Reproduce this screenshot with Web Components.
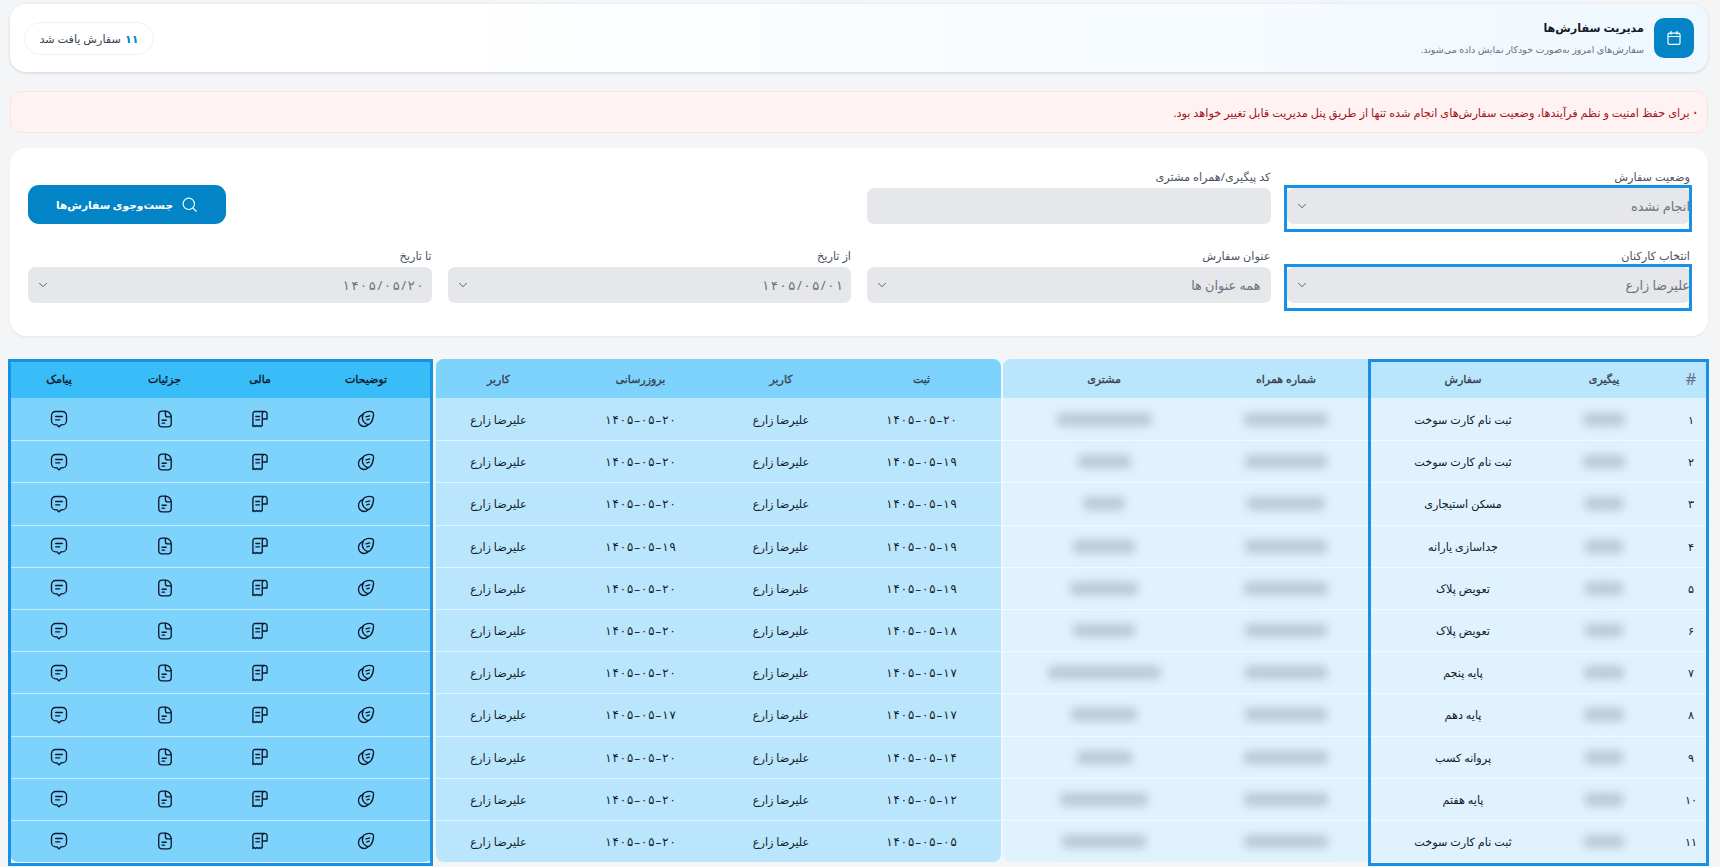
<!DOCTYPE html>
<html lang="fa" dir="rtl">
<head>
<meta charset="utf-8">
<title>مدیریت سفارش‌ها</title>
<style>
    html, body { margin: 0; height: 867px; overflow: hidden; background: #f3f5f7; }
    body {
        box-sizing: border-box;
        padding: 4px 12px 0 10px;
        font-family: "Noto Sans", "DejaVu Sans", sans-serif;
        color: #1f2937;
    }
</style>
</head>
<body>
<order-header></order-header>
<order-alert>برای حفظ امنیت و نظم فرآیندها، وضعیت سفارش‌های انجام شده تنها از طریق پنل مدیریت قابل تغییر خواهد بود.</order-alert>
<order-filters></order-filters>
<order-table></order-table>

<script>
const ICONS = {
    calendar: '<rect x="4" y="5.5" width="16" height="15" rx="2"/><path d="M4 10h16M8 3v4M16 3v4"/>',
    search: '<circle cx="11" cy="11" r="8"/><path d="M17 17l4.5 4.5"/>',
    chevron: '<path d="M6 9l6 6 6-6"/>',
    notes: '<path d="M8.5 6.5C5 8 3 11 3 14c0 4 3 7 6.5 7 2 0 3.8-.7 5-2"/><path d="M10 4.5c3.5-1.5 7.5-1.8 9.5-1 1.2.5 1.7 1.5 1.6 3-.3 4-1.5 8-3.6 10.5-1.3 1.5-3 2-4.8 1.2-2.5-1.2-4.5-3.5-5-6.5-.4-2.8.2-5.6 2.3-7.2z"/><path d="M12 9.5l4.5-1.2M13 13l3-.8"/>',
    receipt: '<path d="M17 3H6a2.5 2.5 0 0 0-2.5 2.5V21l1.6-1.3 1.6 1.3 1.6-1.3 1.6 1.3 1.6-1.3 1.6 1.3 1.6-1.3V5.5A2.5 2.5 0 0 1 17 3a2.8 2.8 0 0 1 3.5 2.7V12h-6"/><path d="M7 9h4.5M7 13h4.5"/>',
    file: '<path d="M9 2.5h3.5c4 0 7 3.5 7 7.5v7.5a4 4 0 0 1-4 4h-7a4 4 0 0 1-4-4v-11a4 4 0 0 1 4-4z"/><path d="M12.5 2.5v4a3 3 0 0 0 3 3h4"/><path d="M8.5 13.5h5M8.5 17h3"/>',
    message: '<path d="M8 3h8a5 5 0 0 1 5 5v6a5 5 0 0 1-5 5h-1.5L12 21.5 9.5 19H8a5 5 0 0 1-5-5V8a5 5 0 0 1 5-5z"/><path d="M8 9h8M8 13h5"/>'
};

function icon(name, size, width) {
    return `<svg xmlns="http://www.w3.org/2000/svg" width="${size}" height="${size}" viewBox="0 0 24 24" fill="none" stroke="currentColor" stroke-width="${width}" stroke-linecap="round" stroke-linejoin="round">${ICONS[name]}</svg>`;
}

// ارقام فارسی با letter-spacing فاصله نمی‌گیرند، برای همین هر نویسه جدا می‌شود
function spaced(text, cls) {
    return `<span class="${cls}" dir="ltr">${[...text].map(c => `<span>${c}</span>`).join('')}</span>`;
}

class OrderHeader extends HTMLElement {
    constructor() {
        super();
        this.attachShadow({ mode: 'open' });
        this.shadowRoot.innerHTML = `
            <style>
                :host {
                    display: flex;
                    align-items: center;
                    justify-content: space-between;
                    height: 68px;
                    box-sizing: border-box;
                    padding: 0 14px;
                    border-radius: 16px;
                    background: linear-gradient(to left, #eff8ff, #ffffff 75%);
                    box-shadow: 0 1px 3px rgba(100, 116, 139, .25);
                }
                .title { display: flex; align-items: center; gap: 10px; }
                .box {
                    width: 40px; height: 40px;
                    border-radius: 10px;
                    background: #0284c7;
                    color: #fff;
                    display: flex; align-items: center; justify-content: center;
                }
                h1 { margin: 0 0 7px; font-size: 11.2px; line-height: 17px; font-weight: 700; color: #111827; }
                p { margin: 0; font-size: 9.5px; line-height: 14px; color: #6b7280; }
                .count {
                    height: 33px;
                    width: 130px;
                    box-sizing: border-box;
                    border: 1px solid #eef0f3;
                    border-radius: 17px;
                    background: #fff;
                    display: flex; align-items: center; justify-content: center; gap: 4px;
                    font-size: 11.2px;
                    color: #374151;
                }
                .count b { color: #0284c7; font-weight: 700; }
            </style>
            <div class="title">
                <div class="box">${icon('calendar', 18, 1.6)}</div>
                <div>
                    <h1>مدیریت سفارش‌ها</h1>
                    <p>سفارش‌های امروز به‌صورت خودکار نمایش داده می‌شوند.</p>
                </div>
            </div>
            <div class="count"><b>۱۱</b> سفارش یافت شد</div>
        `;
    }
}

class OrderAlert extends HTMLElement {
    constructor() {
        super();
        this.attachShadow({ mode: 'open' });
        this.shadowRoot.innerHTML = `
            <style>
                :host {
                    display: flex;
                    align-items: center;
                    gap: 4px;
                    height: 42px;
                    margin-top: 19px;
                    box-sizing: border-box;
                    padding: 0 10px;
                    border: 1px solid #fde4e2;
                    border-radius: 12px;
                    background: #fef2f2;
                    color: #a3141c;
                    font-size: 11.3px;
                }
                .dot { font-size: 9px; color: #dc2626; }
            </style>
            <span class="dot">•</span><slot></slot>
        `;
    }
}

class OrderField extends HTMLElement {
    constructor() {
        super();
        this.attachShadow({ mode: 'open' });
    }

    connectedCallback() {
        const chevron = this.hasAttribute('plain') ? '' : icon('chevron', 14, 1.6);
        const date = this.getAttribute('date');
        const value = date ? spaced(date, 'num') : '<span><slot></slot></span>';
        const mark = this.hasAttribute('marked') ? '<div class="mark"></div>' : '';
        this.shadowRoot.innerHTML = `
            <style>
                :host { display: block; min-width: 0; }
                label {
                    display: block;
                    height: 20px;
                    font-size: 11.3px;
                    line-height: 18px;
                    color: #4b5563;
                }
                .input {
                    position: relative;
                    height: 36px;
                    box-sizing: border-box;
                    padding: 0 10px 0 8px;
                    border-radius: 7px;
                    background: #e5e7eb;
                    color: #6b7280;
                    font-size: 12.8px;
                    display: flex;
                    align-items: center;
                    justify-content: space-between;
                }
                .num { display: inline-flex; gap: 1.7px; font-size: 13px; margin-right: -2px; }
                :host([marked]) .input { padding-right: 0; }
                svg { color: #4b5563; }
                .mark {
                    position: absolute;
                    inset: -3px -2px -8px -3px;
                    border: 3px solid #1a8fe6;
                    pointer-events: none;
                }
            </style>
            <label>${this.getAttribute('label')}</label>
            <div class="input">
                ${value}
                ${chevron}
                ${mark}
            </div>
        `;
    }
}

class OrderFilters extends HTMLElement {
    constructor() {
        super();
        this.attachShadow({ mode: 'open' });
        this.shadowRoot.innerHTML = `
            <style>
                :host {
                    display: grid;
                    grid-template-columns: repeat(4, 1fr);
                    column-gap: 16px;
                    row-gap: 23px;
                    align-items: end;
                    height: 188px;
                    margin-top: 15px;
                    box-sizing: border-box;
                    padding: 20px 18px 33px 18px;
                    border-radius: 16px;
                    background: #fff;
                    box-shadow: 0 1px 2px rgba(100, 116, 139, .12);
                }
                button {
                    grid-column: 4;
                    justify-self: end;
                    width: 198px;
                    height: 39px;
                    border: 0;
                    border-radius: 11px;
                    background: #0284c7;
                    color: #fff;
                    font: 700 10.6px "Noto Sans", "DejaVu Sans", sans-serif;
                    display: flex; align-items: center; justify-content: center; gap: 8px;
                }
                .spacer { grid-column: 3; }
            </style>
            <order-field label="وضعیت سفارش" marked>انجام نشده</order-field>
            <order-field label="کد پیگیری/همراه مشتری" plain></order-field>
            <div class="spacer"></div>
            <button>${icon('search', 17, 1.6)}جست‌وجوی سفارش‌ها</button>
            <order-field label="انتخاب کارکنان" marked>علیرضا زارع</order-field>
            <order-field label="عنوان سفارش">همه عنوان ها</order-field>
            <order-field label="از تاریخ" date="۱۴۰۵/۰۵/۰۱"></order-field>
            <order-field label="تا تاریخ" date="۱۴۰۵/۰۵/۲۰"></order-field>
        `;
    }
}

class OrderGroup extends HTMLElement {
    constructor() {
        super();
        this.attachShadow({ mode: 'open' });
    }

    // columns: پهنای ستون‌ها، heads: عنوان‌ها، rows: آرایه سلول‌ها به صورت html
    render(columns, heads, rows) {
        const cells = rows.map(row => row.map(c => `<div class="cell">${c}</div>`).join('')).join('');
        this.shadowRoot.innerHTML = `
            <style>
                :host {
                    display: grid;
                    grid-template-columns: ${columns};
                    grid-template-rows: 39px repeat(11, 42.2px);
                    border-radius: 8px;
                    overflow: hidden;
                    font-size: 11.2px;
                    background: var(--body-bg);
                }
                .head {
                    background: var(--head-bg);
                    display: flex; align-items: center; justify-content: center;
                    font-size: 11px;
                    -webkit-text-stroke: .35px currentColor;
                    color: var(--head-color, #374151);
                }
                .hash { font-size: 17px; font-weight: 400; -webkit-text-stroke: 0; color: #64748b; }
                .cell {
                    display: flex; align-items: center; justify-content: center;
                    border-top: 1px solid rgba(255, 255, 255, .55);
                    box-sizing: border-box;
                    color: #111827;
                }
                .head ~ .cell:nth-child(-n+${heads.length * 2 + 1}) { border-top: 0; }
                .blur {
                    height: 13px;
                    border-radius: 4px;
                    background: #a9b8c4;
                    opacity: .72;
                    filter: blur(5px);
                }
                .date { display: inline-flex; gap: 1px; font-size: 11.6px; }
                svg { color: #0f172a; }
            </style>
            ${heads.map(h => `<div class="head">${h}</div>`).join('')}
            ${cells}
        `;
    }
}

class OrderTable extends HTMLElement {
    constructor() {
        super();
        this.attachShadow({ mode: 'open' });
        this.shadowRoot.innerHTML = `
            <style>
                :host {
                    display: grid;
                    grid-template-columns: 705px 565px 423px;
                    column-gap: 2.5px;
                    position: relative;
                    margin-top: 23px;
                }
                .mark {
                    position: absolute;
                    top: 0;
                    bottom: -4px;
                    box-sizing: border-box;
                    border: 3px solid #1a8fe6;
                    pointer-events: none;
                }
                .right { right: -1px; width: 341px; }
                .left { left: -2px; width: 425px; }
                .g1 { --head-bg: #bae6fd; --body-bg: #e0f2fe; }
                .g2 { --head-bg: #7dd3fc; --body-bg: #bae6fd; }
                .g3 { --head-bg: #38bdf8; --body-bg: #7dd3fc; --head-color: #0f172a; }
            </style>
            <order-group class="g1"></order-group>
            <order-group class="g2"></order-group>
            <order-group class="g3"></order-group>
            <div class="mark right"></div>
            <div class="mark left"></div>
        `;
    }

    connectedCallback() {
        const user = 'علیرضا زارع';
        const fuel = 'ثبت نام کارت سوخت';
        const orders = [
            ['۱', 42, fuel, 84, 95, '۲۰', '۲۰'],
            ['۲', 42, fuel, 82, 53, '۱۹', '۲۰'],
            ['۳', 38, 'مسکن استیجاری', 78, 42, '۱۹', '۲۰'],
            ['۴', 38, 'جداسازی یارانه', 82, 62, '۱۹', '۱۹'],
            ['۵', 38, 'تعویض پلاک', 84, 68, '۱۹', '۲۰'],
            ['۶', 38, 'تعویض پلاک', 82, 62, '۱۸', '۲۰'],
            ['۷', 40, 'پایه پنجم', 82, 113, '۱۷', '۲۰'],
            ['۸', 40, 'پایه دهم', 82, 66, '۱۷', '۱۷'],
            ['۹', 38, 'پروانه کسب', 84, 55, '۱۴', '۲۰'],
            ['۱۰', 38, 'پایه هفتم', 84, 88, '۱۲', '۲۰'],
            ['۱۱', 40, fuel, 84, 84, '۰۵', '۲۰']
        ];
        const blur = w => `<div class="blur" style="width:${w}px"></div>`;
        const date = d => spaced(`۱۴۰۵–۰۵–${d}`, 'date');
        const shift = w => `<div style="padding-left:25px">${blur(w)}</div>`;
        const groups = this.shadowRoot.querySelectorAll('order-group');

        groups[0].render('34px 140px 142px 212px 177px',
            ['<span class="hash">#</span>', 'پیگیری', 'سفارش', 'شماره همراه', '<span style="padding-left:25px">مشتری</span>'],
            orders.map(o => [o[0], blur(o[1]), o[2], blur(o[3]), shift(o[4])]));
        groups[1].render('158px 123px 158px 126px',
            ['ثبت', 'کاربر', 'بروزرسانی', 'کاربر'],
            orders.map(o => [date(o[5]), user, date(o[6]), user]));
        groups[2].render('134px 78px 113px 98px',
            ['توضیحات', 'مالی', 'جزئیات', 'پیامک'],
            orders.map(() => [icon('notes', 20, 1.6), icon('receipt', 20, 1.6), icon('file', 20, 1.6), icon('message', 20, 1.6)]));
    }
}

customElements.define('order-header', OrderHeader);
customElements.define('order-alert', OrderAlert);
customElements.define('order-field', OrderField);
customElements.define('order-filters', OrderFilters);
customElements.define('order-group', OrderGroup);
customElements.define('order-table', OrderTable);
</script>
</body>
</html>
